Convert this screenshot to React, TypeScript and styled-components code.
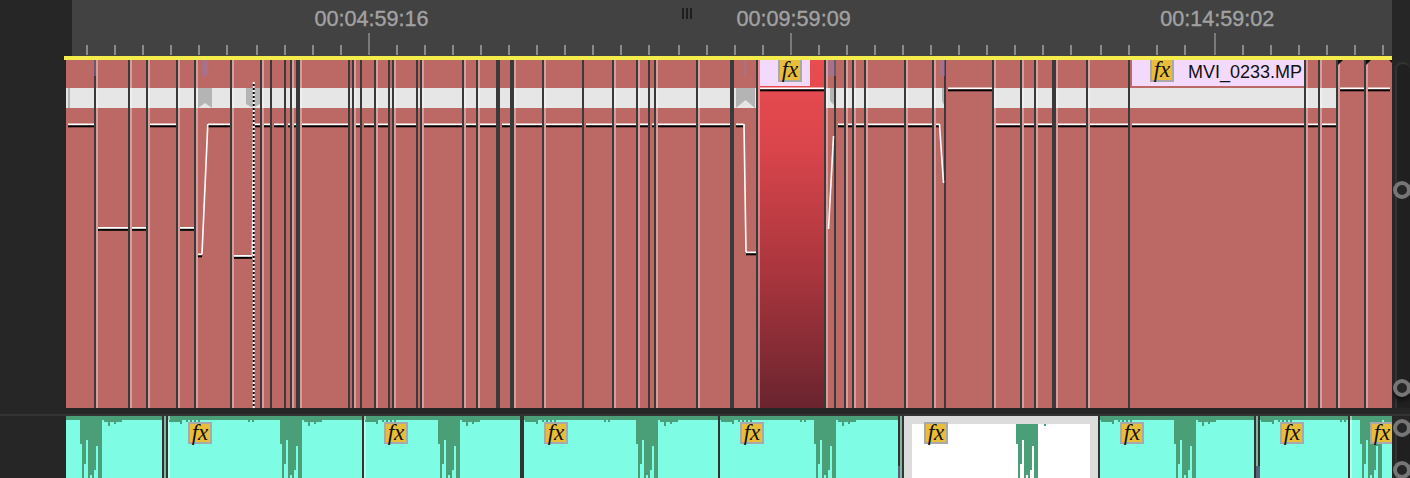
import React from "react";
import styled, { createGlobalStyle } from "styled-components";

const TRACK_END = 1392;
const DARK = "#262626";

const Global = createGlobalStyle`
  html, body { margin: 0; padding: 0; background: ${DARK}; overflow: hidden; }
  #root { width: 1410px; height: 478px; }
`;

const Page = styled.div`
  width: 1410px;
  height: 478px;
  display: flex;
  flex-direction: column;
  background: ${DARK};
  font-family: "Liberation Sans", Arial, sans-serif;
  overflow: hidden;
`;

const RulerRow = styled.div`
  display: flex;
  height: 56px;
  flex: none;
`;
const RulerCap = styled.div<{ $w: number }>`
  flex: 0 0 ${(p) => p.$w}px;
  background: ${DARK};
`;
const Ruler = styled.div`
  position: relative;
  flex: 1;
  background: #424242;
  display: flex;
  flex-direction: column;
  justify-content: space-between;
  padding-bottom: 1px;
  box-sizing: border-box;
`;
const LabelRow = styled.div`
  display: flex;
  gap: 308px;
  padding: 6px 0 0 242.5px;
`;
const TimeLabel = styled.span`
  flex: 0 0 114px;
  white-space: nowrap;
  font-size: 21.6px;
  line-height: 25px;
  color: #a2a2a2;
  -webkit-text-stroke: 0.35px #a2a2a2;
`;
const LastTimeLabel = styled(TimeLabel)`
  margin-left: 1.5px;
`;
const TickRow = styled.div`
  display: flex;
  align-items: flex-end;
`;
const Tick = styled.i<{ $gap: number; $major: boolean }>`
  flex: none;
  width: 2px;
  height: ${(p) => (p.$major ? 22 : 10)}px;
  margin-left: ${(p) => p.$gap}px;
  background: ${(p) => (p.$major ? "#7a7a7a" : "#8b8b8b")};
`;
const Grip = styled.svg`
  position: absolute;
  left: 610px;
  top: 8px;
`;

const TrackRow = styled.div<{ $h: number }>`
  display: flex;
  height: ${(p) => p.$h}px;
  flex: none;
`;
const Gutter = styled.div`
  flex: 0 0 64px;
  background: ${DARK};
`;
const VideoColumn = styled.div`
  flex: 0 0 1328px;
  display: flex;
  flex-direction: column;
`;
const Playline = styled.div`
  height: 4px;
  flex: none;
  background: #f4ec4a;
`;
const ClipRow = styled.div`
  position: relative;
  display: flex;
  flex: 1;
  padding-left: 2px;
  background: ${DARK};
  min-height: 0;
`;
const Overlay = styled.svg`
  position: absolute;
  left: 0;
  top: 0;
  pointer-events: none;
`;

const Clip = styled.div<{ $w: number; $cut: number; $light: boolean; $band: boolean; $red: boolean }>`
  flex: 0 0 ${(p) => p.$w}px;
  box-sizing: border-box;
  display: flex;
  align-items: flex-start;
  border-left: ${(p) => p.$cut}px solid #3a3a3a;
  box-shadow: ${(p) => (p.$light ? "inset 2px 0 0 rgba(255,255,255,.36)" : "none")};
  background: ${(p) =>
    p.$red
      ? "linear-gradient(to bottom, #ea4c50 0%, #d9454b 25%, #a8353d 62%, #6a242e 100%)"
      : p.$band
        ? "linear-gradient(to bottom, #bc6864 28px, #e6e6e6 28px, #e6e6e6 48px, #bc6864 48px)"
        : "#bc6864"};
`;
const ClipHead = styled.div<{ $w: number }>`
  flex: 0 0 ${(p) => p.$w}px;
  height: 26px;
  margin-left: 2px;
  display: flex;
  align-items: flex-start;
  background: #f3d9fb;
`;
const Fx = styled.span`
  flex: none;
  box-sizing: border-box;
  width: 24px;
  height: 22px;
  display: flex;
  align-items: center;
  justify-content: center;
  background: #e9bd3c;
  border: 2px solid #a9a9a9;
  color: #111;
  font-family: "Liberation Serif", "Times New Roman", serif;
  font-style: italic;
  font-size: 23px;
  line-height: 18px;
`;
const HeadFx = styled(Fx)<{ $at: number }>`
  margin-left: ${(p) => p.$at}px;
  border-top: none;
`;
const AudioFx = styled(Fx)<{ $at: number }>`
  position: absolute;
  z-index: 1;
  top: 6px;
  left: ${(p) => p.$at}px;
`;
const ClipTitle = styled.span`
  margin-left: 14px;
  font-size: 18px;
  line-height: 25px;
  color: #111;
  white-space: nowrap;
`;

const Divider = styled.div`
  flex: none;
  height: 8px;
  box-sizing: border-box;
  background: ${DARK};
  border-bottom: 2px solid #343434;
`;

const Side = styled.div`
  position: relative;
  flex: 0 0 18px;
  background: ${DARK};
  overflow: hidden;
`;
const Rail = styled.div`
  height: 100%;
  margin: 6px 0 0 3px;
  border: 2px solid #333;
  border-right: none;
  border-bottom: none;
  border-radius: 10px 10px 0 0;
  background: #202020;
`;
const Knob = styled.div<{ $top: number; $shadow?: boolean }>`
  position: absolute;
  left: 1px;
  top: ${(p) => p.$top}px;
  width: 18px;
  height: 18px;
  box-sizing: border-box;
  border-radius: 50%;
  border: 4px solid #767676;
  background: #262626;
  box-shadow: ${(p) => (p.$shadow ? "0 4px 4px #111" : "none")};
`;

const AudioRow = styled.div`
  position: relative;
  flex: 0 0 1328px;
  display: flex;
  padding-left: 2px;
  box-sizing: border-box;
  background: ${DARK};
  overflow: hidden;
`;
const AudioClip = styled.div<{ $w: number; $cut: number; $kind: string; $light: boolean }>`
  flex: 0 0 ${(p) => p.$w}px;
  box-sizing: border-box;
  border-left: ${(p) => p.$cut}px solid #333;
  box-shadow: ${(p) => (p.$light ? "inset 2px 0 0 rgba(255,255,255,.45)" : "none")};
  background: ${(p) =>
    p.$kind === "white"
      ? "linear-gradient(#dcdcdc 8px, transparent 8px), linear-gradient(to right, #dcdcdc 8px, #fff 8px, #fff calc(100% - 8px), #dcdcdc calc(100% - 8px))"
      : p.$kind === "dim"
        ? "#7fb7a3"
        : "linear-gradient(to bottom,#4b9f78 4px,#7ffde4 4px)"};
`;

type C = [number, number, boolean, number | null];
const T = true;
const F = false;
const clips: C[] = [
  [66, 0, F, 123.5], [94, 2, T, 227], [128, 2, T, 227], [146, 2, T, 123.5], [176, 2, T, 227],
  [194, 2, T, null], [230, 2, T, null], [260, 2, T, 123.5], [270, 2, F, 123.5], [284, 2, F, 123.5],
  [290, 2, T, 123.5], [296, 4, T, 123.5], [348, 2, F, 123.5], [352, 2, T, 123.5], [360, 2, F, 123.5],
  [374, 2, T, 123.5], [388, 2, F, 123.5], [392, 2, T, 123.5], [416, 2, F, 123.5], [420, 2, T, 123.5],
  [462, 2, T, 123.5], [476, 2, T, 123.5], [496, 4, F, 123.5], [510, 4, T, 123.5], [542, 2, T, 123.5],
  [582, 2, F, 123.5], [612, 2, T, 123.5], [636, 2, T, 123.5], [648, 2, F, 123.5], [654, 2, T, 123.5],
  [696, 2, T, 123.5], [730, 4, F, null], [756, 2, T, 87.5], [824, 2, T, null], [834, 2, F, 123.5],
  [844, 2, T, 123.5], [852, 2, T, 123.5], [864, 2, T, 123.5], [904, 2, T, 123.5], [932, 2, T, null],
  [944, 2, F, 87.5], [992, 2, T, 123.5], [1020, 2, T, 123.5], [1034, 2, T, 123.5], [1052, 4, T, 123.5],
  [1086, 2, T, 123.5], [1128, 2, F, 123.5], [1304, 2, T, 123.5], [1318, 2, T, 123.5], [1336, 2, T, 87.5],
  [1364, 2, T, 87.5],
];

const hasBand = (x: number) => x < 756 || (x >= 824 && x < 944) || (x >= 992 && x < 1336);

const extraSegments: [number, number, number][] = [
  [198, 202, 253.5], [208, 230, 123.5], [234, 252, 255], [254, 260, 123.5],
  [736, 743.5, 123.5], [746, 756, 251.5], [936, 939.5, 123.5],
];
const segments: [number, number, number][] = [
  ...clips.flatMap((c, i): [number, number, number][] => {
    if (c[3] === null) return [];
    const next = Math.min(clips[i + 1]?.[0] ?? 1390, 1390);
    const from = c[0] + c[1] + 2;
    return next > from ? [[from, next, c[3]]] : [];
  }),
  ...extraSegments,
];
const ramps: [number, number, number, number][] = [
  [202, 254, 207.8, 124],
  [252.4, 255, 253.6, 124],
  [744, 124, 746, 252],
  [833.5, 136, 828.5, 229],
  [939.5, 124, 943.5, 183],
];
const marks: string[] = [
  "198,88 212,88 212,108 205,103 198,108",
  "246,88 260,88 260,104 253,108 246,104",
  "736,88 755,88 755,108 745.5,100 736,108",
  "830,88 834,88 834,105 830,101",
  "942,88 944,88 944,105 942,101",
  "68,88 70,88 70,108 68,108",
];
const flags: [number, number][] = [[94, 2], [202, 6], [744, 2], [828, 8], [940, 5]];
const notches: string[] = [
  "1338,60 1343,60 1338,65",
  "1366,60 1371,60 1366,65",
  "1389,60 1392,60 1392,63",
];

const tickXs = [
  87, 115, 143, 171, 199, 227, 257, 285, 313, 341, 369, 397, 425, 453, 481, 509, 537, 565, 593, 621, 649,
  679, 707, 735, 763, 791, 819, 847, 875, 903, 931, 959, 987, 1015, 1043, 1071, 1101, 1129, 1157, 1185,
  1215, 1243, 1271, 1299, 1327, 1355, 1383,
];
const majors = [369, 791, 1215];

type A = [number, number, string, boolean];
const audioClips: A[] = [
  [66, 0, "cyan", F], [162, 2, "dim", F], [166, 2, "cyan", T], [362, 2, "cyan", T], [520, 4, "cyan", F],
  [718, 2, "cyan", F], [898, 2, "dim", F], [902, 2, "white", F], [1098, 2, "cyan", F], [1254, 2, "dim", F],
  [1258, 2, "cyan", F], [1348, 2, "cyan", T],
];
const audioFx = [188, 384, 544, 740, 924, 1120, 1280, 1370];
const peaks: [number, number][] = [
  [80, 416], [280, 416], [438, 416], [636, 416], [814, 416], [1016, 424], [1174, 416], [1360, 416],
];
const fingers: [number, number, number][] = [
  [0, 2, 444], [2, 4, 478], [4, 6, 464], [6, 8, 440], [8, 10, 478], [10, 12, 475], [12, 14, 478],
  [14, 16, 470], [16, 18, 446], [18, 22, 478],
];
const fringe: [number, number, number][] = [[24, 28, 422], [28, 30, 426], [30, 34, 422], [34, 36, 424], [36, 42, 422]];
const clipStarts = [168, 364, 524, 720, 1100, 1260];
const startBumps: [number, number, number][] = [
  [1, 12, 422], [12, 14, 424], [18, 20, 422], [22, 24, 422], [26, 28, 422], [30, 32, 422], [80, 82, 422], [84, 86, 422],
];
const GREEN = "#4b9f78";

const Rubber = () => (
  <Overlay width={1328} height={348} viewBox="64 60 1328 348">
    {flags.map(([x, w]) => (
      <rect key={x} x={x} y={60} width={w} height={16} fill="rgba(150,120,170,.5)" />
    ))}
    {marks.map((p) => (
      <polygon key={p} points={p} fill="#b4b4b4" />
    ))}
    {segments.map(([a, b, y]) => (
      <g key={`${a}-${y}`}>
        <rect x={a} y={y} width={b - a} height={2} fill="#fff" />
        <rect x={a} y={y + 1.8} width={b - a} height={2} fill="#000" />
      </g>
    ))}
    {ramps.map(([a, b, c, d]) => (
      <line key={a} x1={a} y1={b} x2={c} y2={d} stroke="#fff" strokeWidth={1.6} />
    ))}
    <line x1={253.7} y1={82} x2={253.7} y2={408} stroke="#fff" strokeWidth={2} />
    <line x1={253.7} y1={84} x2={253.7} y2={408} stroke="#000" strokeWidth={2} strokeDasharray="2 2" />
    {notches.map((p) => (
      <polygon key={p} points={p} fill="#111" />
    ))}
  </Overlay>
);

const Waves = () => (
  <Overlay width={1328} height={62} viewBox="64 416 1328 62">
    {clipStarts.flatMap((s) =>
      startBumps.map(([a, b, y]) => (
        <rect key={`${s}-${a}`} x={s + a} y={420} width={b - a} height={y - 420} fill={GREEN} />
      )),
    )}
    {peaks.flatMap(([x, top]) => [
      ...fingers.map(([a, b, y]) => (
        <rect key={`p${x}-${a}`} x={x + a} y={top} width={b - a} height={y - top} fill={GREEN} />
      )),
      ...(top === 416
        ? fringe.map(([a, b, y]) => (
            <rect key={`f${x}-${a}`} x={x + a} y={420} width={b - a} height={y - 420} fill={GREEN} />
          ))
        : []),
    ])}
    <rect x={1044} y={424} width={2} height={2} fill={GREEN} />
    <rect x={898} y={466} width={2} height={12} fill="#55607a" />
    <rect x={1256} y={466} width={4} height={12} fill="#55607a" />
  </Overlay>
);

export default function App() {
  return (
    <Page>
      <Global />
      <RulerRow>
        <RulerCap $w={72} />
        <Ruler>
          <LabelRow>
            <TimeLabel>00:04:59:16</TimeLabel>
            <TimeLabel>00:09:59:09</TimeLabel>
            <LastTimeLabel>00:14:59:02</LastTimeLabel>
          </LabelRow>
          <Grip width={10} height={11} viewBox="0 0 10 11">
            <path d="M0 0h2v11H0zM4 0h2v11H4zM8 0h2v11H8z" fill="#1e1e1e" />
          </Grip>
          <TickRow>
            {tickXs.map((x, i) => (
              <Tick key={x} $major={majors.includes(x)} $gap={i === 0 ? 14 : x - tickXs[i - 1] - 2} />
            ))}
          </TickRow>
        </Ruler>
        <RulerCap $w={18} />
      </RulerRow>

      <TrackRow $h={352}>
        <Gutter />
        <VideoColumn>
          <Playline />
          <ClipRow>
            {clips.map(([x, cut, light], i) => {
              const next = clips[i + 1]?.[0] ?? TRACK_END;
              return (
                <Clip key={x} $w={next - x} $cut={cut} $light={light} $band={hasBand(x)} $red={x === 756}>
                  {x === 756 && (
                    <ClipHead $w={50}>
                      <HeadFx $at={18}>fx</HeadFx>
                    </ClipHead>
                  )}
                  {x === 1128 && (
                    <ClipHead $w={172}>
                      <HeadFx $at={18}>fx</HeadFx>
                      <ClipTitle>MVI_0233.MP</ClipTitle>
                    </ClipHead>
                  )}
                </Clip>
              );
            })}
            <Rubber />
          </ClipRow>
        </VideoColumn>
        <Side>
          <Rail />
          <Knob $top={125} />
          <Knob $top={323} $shadow />
        </Side>
      </TrackRow>

      <Divider />

      <TrackRow $h={62}>
        <Gutter />
        <AudioRow>
          {audioClips.map(([x, cut, kind, light], i) => {
            const next = audioClips[i + 1]?.[0] ?? TRACK_END;
            return <AudioClip key={x} $w={next - x} $cut={cut} $kind={kind} $light={light} />;
          })}
          <Waves />
          {audioFx.map((x) => (
            <AudioFx key={x} $at={x - 64}>
              fx
            </AudioFx>
          ))}
        </AudioRow>
        <Side>
          <Rail />
          <Knob $top={3} />
          <Knob $top={45} />
        </Side>
      </TrackRow>
    </Page>
  );
}
